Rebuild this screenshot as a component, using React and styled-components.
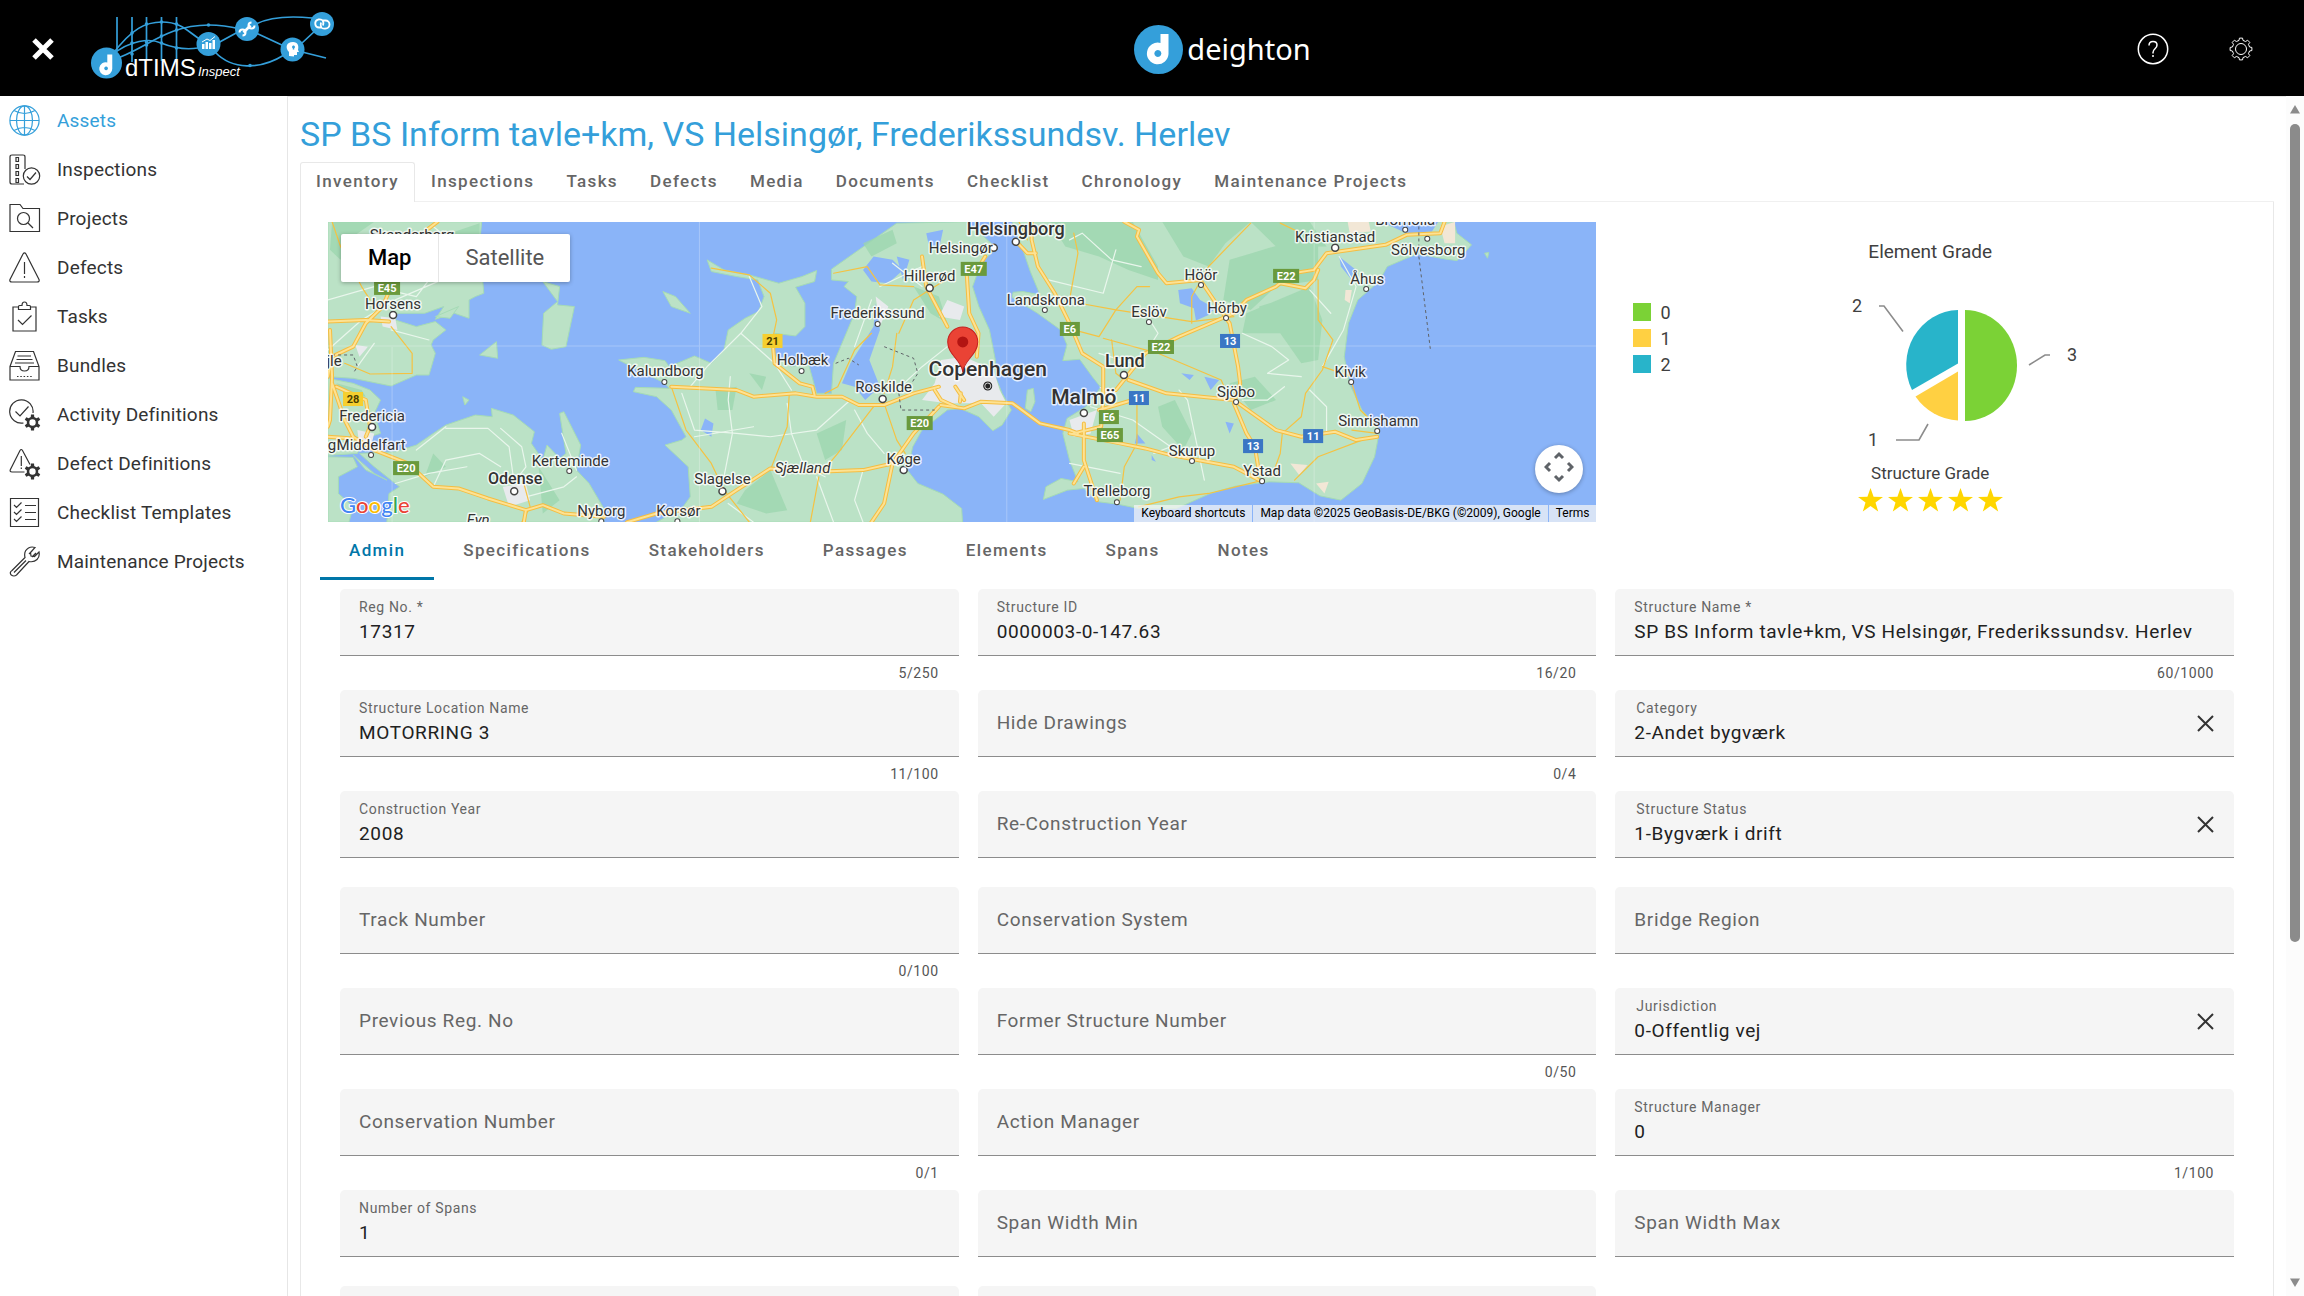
import React, { useId } from "react";
import styled, { createGlobalStyle } from "styled-components";

const BLUE = "#349fda";
const GlobalStyle = createGlobalStyle`
  *, *::before, *::after { box-sizing: border-box; }
  body { margin: 0; background: #fff; color: #333; font-family: Roboto, "Liberation Sans", sans-serif; }
  button, input { font: inherit; letter-spacing: inherit; color: inherit; border: 0; background: none; padding: 0; margin: 0; outline: 0; }
  h1, h2, h3, ul { margin: 0; padding: 0; font-weight: 400; }
  ul { list-style: none; }
  a { color: inherit; text-decoration: none; }
`;

const Shell = styled.div`
  display: flex;
  flex-direction: column;
  height: 100vh;
  overflow: hidden;
`;
const Header = styled.header`
  flex: none;
  display: flex;
  align-items: center;
  justify-content: space-between;
  height: 96px;
  padding: 2px 19px 0 0;
  background: #000;
  color: #fff;
`;
const HeaderStart = styled.div`
  display: flex;
  align-items: center;
`;
const MenuButton = styled.button`
  display: flex;
  align-items: center;
  justify-content: center;
  width: 86px;
  height: 94px;
`;
const Brand = styled.div`
  display: flex;
  align-items: center;
  gap: 4px;
  font: 29px/40px "Noto Sans", sans-serif;
`;
const HeaderEnd = styled.div`
  display: flex;
`;
const HeaderButton = styled.button`
  display: flex;
  align-items: center;
  justify-content: center;
  width: 88px;
  height: 94px;
`;
const Body = styled.div`
  flex: 1;
  display: flex;
  min-height: 0;
`;
const Sidebar = styled.nav`
  flex: none;
  width: 288px;
  border-right: 1px solid #e6e6e6;
`;
const NavLink = styled.a`
  display: flex;
  align-items: center;
  gap: 16px;
  height: 49px;
  padding-left: 9px;
  font-size: 19px;
  line-height: 24px;
  letter-spacing: 0.01em;
  color: ${(p) => (p.$active ? BLUE : "#333")};
`;
const NavIcon = styled.svg`
  flex: none;
  width: 32px;
  height: 32px;
  fill: none;
  stroke: currentColor;
  stroke-width: 1.2;
`;
const Main = styled.main`
  flex: 1;
  min-width: 0;
  overflow: hidden;
  padding: 17px 12px 0;
  border-top: 1px solid #e6e6e6;
`;
const Title = styled.h1`
  margin-bottom: 8px;
  font-size: 34px;
  line-height: 40px;
  color: ${BLUE};
`;
const PageTabs = styled.div`
  display: flex;
  border-bottom: 1px solid #f0f0f0;
`;
const PageTab = styled.button`
  height: 40px;
  margin-bottom: -1px;
  padding: 0 15px 3px;
  border: 1px solid ${(p) => (p.$active ? "#e8e8e8" : "transparent")};
  border-bottom: 0;
  border-radius: 3px 3px 0 0;
  background: ${(p) => (p.$active ? "#fff" : "transparent")};
  font-size: 17px;
  font-weight: 500;
  letter-spacing: 0.08em;
  color: #666;
`;
const Panel = styled.section`
  border: 1px solid #e8e8e8;
  border-width: 0 1px;
`;
const Overview = styled.div`
  display: grid;
  grid-template-columns: minmax(0, 15fr) minmax(0, 8fr);
  padding: 20px 0 0 27px;
`;
const MapBox = styled.div`
  position: relative;
  height: 300px;
  overflow: hidden;
  background: #8ab4f8;
`;
const MapArt = styled.svg`
  display: block;
  width: 100%;
  height: 100%;
`;
const MapTypes = styled.div`
  position: absolute;
  top: 12px;
  left: 13px;
  display: flex;
  border-radius: 2px;
  background: #fff;
  box-shadow: 0 1px 4px rgba(0, 0, 0, 0.3);
`;
const MapTypeButton = styled.button`
  height: 48px;
  padding: 0 27px 1px;
  font-size: 22px;
  font-weight: ${(p) => (p.$active ? 500 : 400)};
  color: ${(p) => (p.$active ? "#000" : "#565656")};
  & + & {
    padding: 0 26px 1px;
    border-left: 1px solid #e6e6e6;
  }
`;
const PanButton = styled.button`
  position: absolute;
  right: 13px;
  bottom: 29px;
  width: 48px;
  height: 48px;
  border-radius: 50%;
  background: #fff;
  box-shadow: 0 1px 4px rgba(0, 0, 0, 0.3);
`;
const MapFooter = styled.div`
  position: absolute;
  right: 0;
  bottom: 0;
  display: flex;
  gap: 1px;
  font-size: 12px;
  line-height: 17px;
  color: #000;
`;
const MapNote = styled.span`
  padding: 0 7px;
  background: rgba(245, 245, 245, 0.72);
`;
const Grades = styled.div`
  display: flex;
  flex-direction: column;
  align-items: center;
  padding: 18px 9px 0 0;
  color: #404040;
`;
const ChartTitle = styled.h2`
  margin-bottom: 31px;
  font-size: 19px;
  line-height: 24px;
`;
const ChartRow = styled.div`
  align-self: stretch;
  display: flex;
  padding-left: 37px;
`;
const Legend = styled.ul`
  display: flex;
  flex-direction: column;
  gap: 8px;
  width: 213px;
  padding-top: 8px;
`;
const LegendItem = styled.li`
  display: flex;
  align-items: center;
  gap: 9px;
  height: 18px;
  font-size: 18px;
  &::before {
    content: "";
    width: 18px;
    height: 18px;
    background: ${(p) => p.$color};
  }
`;
const RatingTitle = styled.h3`
  margin: 9px 0 4px;
  font-size: 17px;
  line-height: 22px;
`;
const Stars = styled.div`
  display: flex;
  gap: 5px;
`;
const SectionTabs = styled.div`
  display: flex;
  height: 58px;
  padding-left: 19px;
`;
const SectionTab = styled.button`
  padding: 0 29px;
  border-bottom: 3px solid ${(p) => (p.$active ? "#0076a8" : "transparent")};
  font-size: 17px;
  font-weight: 500;
  letter-spacing: 0.08em;
  color: ${(p) => (p.$active ? "#0076a8" : "#666")};
`;
const Form = styled.form`
  display: grid;
  grid-template-columns: repeat(3, minmax(0, 1fr));
  gap: 10px 19px;
  padding: 9px 39px 0 39px;
`;
const Cell = styled.div`
  min-height: 86px;
`;
const Field = styled.div`
  display: grid;
  grid-template-columns: minmax(0, 1fr) auto;
  grid-template-rows: 28px 38px;
  height: 67px;
  padding: 0 19px;
  border-bottom: 1px solid #8c8c8c;
  border-radius: 5px 5px 0 0;
  background: #f5f5f5;
  letter-spacing: 0.04em;
`;
const FieldLabel = styled.label`
  grid-column: 1;
  grid-row: ${(p) => (p.$filled ? "1" : "1 / 3")};
  align-self: ${(p) => (p.$filled ? "end" : "center")};
  padding-left: ${(p) => (p.$choice ? "2px" : "0")};
  font-size: ${(p) => (p.$filled ? "14px" : "19px")};
  line-height: ${(p) => (p.$filled ? "20px" : "24px")};
  color: #666;
  pointer-events: none;
`;
const FieldInput = styled.input`
  grid-column: 1;
  grid-row: ${(p) => (p.$filled ? "2" : "1 / 3")};
  align-self: start;
  width: 100%;
  height: ${(p) => (p.$filled ? "28px" : "66px")};
  font-size: 19px;
  color: #212121;
`;
const ClearButton = styled.button`
  grid-column: 2;
  grid-row: 1 / 3;
  align-self: center;
  display: flex;
  width: 20px;
  height: 20px;
  align-items: center;
  justify-content: center;
`;
const Counter = styled.div`
  height: 24px;
  padding: 7px 20px 0;
  font-size: 14px;
  line-height: 20px;
  letter-spacing: 0.04em;
  text-align: right;
  color: #555;
`;
const ScrollBar = styled.div`
  flex: none;
  display: flex;
  flex-direction: column;
  align-items: center;
  justify-content: space-between;
  width: 18px;
  padding: 9px 0;
  background: #fcfcfc;
`;
const ScrollTrack = styled.div`
  flex: 1;
  width: 10px;
  margin: 10px 0 9px;
`;
const ScrollThumb = styled.div`
  height: 71.4%;
  border-radius: 5px;
  background: #8b8b8b;
`;
const Arrow = styled.svg`
  flex: none;
  display: block;
  width: 10px;
  height: 9px;
  fill: #8b8b8b;
`;

function gearPath(cx, cy, outer, inner, teeth) {
  const pts = [];
  const step = (Math.PI * 2) / teeth;
  for (let i = 0; i < teeth; i++) {
    const a = i * step - Math.PI / 2;
    [[-0.29, inner], [-0.18, outer], [0.18, outer], [0.29, inner]].forEach(([k, r]) =>
      pts.push(`${(cx + Math.cos(a + k * step) * r).toFixed(2)},${(cy + Math.sin(a + k * step) * r).toFixed(2)}`)
    );
  }
  return `M${pts.join("L")}Z`;
}

const SmallGear = () => (
  <g fill="currentColor" stroke="none">
    <path fillRule="evenodd" d={`${gearPath(23.5, 23.5, 8.2, 5.8, 6)}M20.3 23.5a3.2 3.2 0 1 0 6.4 0a3.2 3.2 0 1 0-6.4 0Z`} />
  </g>
);

const icons = {
  globe: <><circle cx="15.5" cy="15.5" r="14.6" /><ellipse cx="15.5" cy="15.5" rx="8" ry="14.6" /><path d="M15.5 1v29M1 15.5h29M5 5.5q10.500 6 21 0M5 25.500q10.500-6 21 0" /></>,
  inspections: <><path d="M16 15V3q0-2-2-2H3Q1 1 1 3v25q0 2 2 2h12" /><path d="M7 3.500h2.500v4H7zM7 10.500h2.500v4H7zM7 17.500h2.500v4H7zM7 24.500h2.500v4H7z" /><circle cx="22.500" cy="22" r="8.200" /><path d="m18 22.500 3 3 6-7" /></>,
  projects: <><path d="M1 28.500V1.500h10l3 4h16.500v23z" /><circle cx="14.500" cy="15.500" r="6" /><path d="m19 20 5 5" /></>,
  warn: <><path d="M14 2q1.500-2.200 3 0l13 25.500q.8 2.500-2 2.500H3q-2.800 0-2-2.500zM15.500 10v12M15.500 24v2" /></>,
  tasks: <><path d="M9 6H4v24h23V6h-5M9.500 8.500V5.500q0-1 1-1H13q0-3.500 2.500-3.500T18 4.500h2.500q1 0 1 1v3z" /><path d="m9 19 4.500 4.500 9-9" /></>,
  bundles: <><path d="M1 16.500 6.500 1.500h18l5.500 15v13.500H1zM1 16.500h10q0 4.500 4.500 4.500t4.500-4.500h10M8.500 6H22M7.500 9.500h16M6 13h19" /><path strokeDasharray="1.500 1.800" d="M8 26.500h15" /></>,
  activity: <><path d="M14.500 24A11.700 11.700 0 1 1 24 14" /><path d="m6.500 12.500 4.500 4.500 8.500-9.500" /><SmallGear /></>,
  defectDef: <><path d="M15.500 24H3q-2.500 0-1.700-2.300L11 2.500q1.200-2 2.500 0l7.500 14M12.300 8v10M12.300 19.500v1.500" /><SmallGear /></>,
  checklist: <><path d="M1.500 1.500h28v28h-28zM16 8.500h11M16 15.500h11M16 22.500h11M5 8l2.500 2.500 5-5M5 15l2.500 2.500 5-5M5 22l2.500 2.500 5-5" /></>,
  wrench: <><path d="M3 24.500 16 11.500Q14.500 5 19.500 2q3-1.700 6.500-.5l-4.500 5 .5 3.500 3.500.5 4.500-4.500q1 4.500-2 7.500t-8 2L7.500 29Q5 31 2.300 29 0 26.500 3 24.500zM5 26.500 17 14.500M20 8l3-3M23 11l4-4" /></>,
};

const navItems = [
  ["Assets", "globe"], ["Inspections", "inspections"], ["Projects", "projects"], ["Defects", "warn"], ["Tasks", "tasks"],
  ["Bundles", "bundles"], ["Activity Definitions", "activity"], ["Defect Definitions", "defectDef"],
  ["Checklist Templates", "checklist"], ["Maintenance Projects", "wrench"],
];

const D_MARK = "M15 4h8v23a10.500 10.500 0 1 1-8-10.200zM13 23.500a3 3 0 1 0 .1 0z";

function ProductLogo() {
  return (
    <svg width="250" height="80" viewBox="86 9 250 80" role="img" aria-label="dTIMS Inspect">
      <g fill="none" stroke={BLUE} strokeWidth="1.700">
        <path d="M117 17v34M132 17v45M146.500 17v42M161.500 17v44M176.500 17v42" />
        <path d="M112 55C132 28 146 22 162 22 182 22 188 32 201 40" />
        <path d="M112 55C130 40 150 38 161 43 176 49 186 50 198 48" />
        <path d="M112 60C145 50 165 25 209 25 224 25 232 27 240 29" />
        <path d="M216 44 238 32M256 24C272 16 292 16 312 18M256 33 284 46M302 43 316 30M302 52 326 58M215 52C232 70 260 70 284 55" />
      </g>
      <g fill={BLUE}>
        <circle cx="106.500" cy="63" r="15.500" />
        <circle cx="208.500" cy="44" r="12" />
        <circle cx="247" cy="29" r="12" />
        <circle cx="292.500" cy="49.500" r="12" />
        <circle cx="322" cy="24" r="12" />
        {[[132, 33], [146.500, 24], [161.500, 22], [176.500, 24], [132, 43], [146.500, 42], [161.500, 43], [161.500, 36], [176.500, 30], [146.500, 45], [132, 54], [176.500, 48], [208.500, 25], [250, 65.500]].map(([x, y], i) => (
          <circle key={i} cx={x} cy={y} r="1.800" />
        ))}
      </g>
      <path fill="#fff" fillRule="evenodd" d={D_MARK} transform="translate(98 52) scale(.62)" />
      <g fill="#fff">
        <path d="M202 44h2.500v5H202zM205.500 42h2.500v7h-2.500zM209 43h2.500v6H209zM212.500 40h2.500v9h-2.500z" />
        <path d="M202 42l5-3 3 1.500 5-4" fill="none" stroke="#fff" />
        <path d="m243.500 32.500 7-7" fill="none" stroke="#fff" strokeWidth="2.600" />
        <path d="M251.500 22.500a3 3 0 1 0 3 3M242.500 35.500a3 3 0 1 0-3-3" fill="none" stroke="#fff" strokeWidth="2" transform="rotate(0 247 29)" />
        <path d="M289 56v-4c-4-4-3-10 4-10 5 0 6 4 5 8l1 2h-2v3h-3v1.500z" />
        <path d="M292 47h3m-1.500-1.500v4" stroke={BLUE} strokeWidth="1.500" />
        <path d="M322 27.500h-3a4 4 0 0 1-1-7.800M322 20.500h3.500a4 4 0 0 1 0 8M318 19.500c5-1 6 2 5 6M326 28.500c-5 1-6-2-5-6" fill="none" stroke="#fff" strokeWidth="1.800" />
        <text x="125" y="76" fontFamily="Liberation Sans, sans-serif" fontSize="24">dTIMS</text>
        <text x="198" y="76" fontFamily="Liberation Sans, sans-serif" fontSize="13" fontStyle="italic">Inspect</text>
      </g>
    </svg>
  );
}

const LAND = [
  "M90 366H455L450 430 460 580 440 590 425 600V655L390 640 345 658 365 620 320 640 255 640 250 660 300 680 345 665 370 690 340 720 335 735 345 760 330 825 300 825 240 858 150 835 90 830Z",
  "M90 835 150 850 190 870 215 900 200 940 215 1000 175 1015 160 1060 90 1066Z",
  "M165 1060 250 1055 300 1035 340 1000 370 975 440 945 480 950 478 925 530 945 580 995 573 1030 600 1080 610 1035 640 1075 655 1060 640 940 650 935 690 1035 680 1110 710 1150 745 1225V1266H230L235 1180 260 1160 200 1100Z",
  "M90 1070 150 1072 160 1100 115 1130 115 1180 150 1220 140 1266H90Z",
  "M600 545 640 560 635 615 675 620 655 740 620 748 598 735 602 640 635 605Z",
  "M450 765 490 725 493 775ZM885 575 915 590 950 640 905 620ZM345 650 400 620 380 655ZM410 890 425 900 415 915ZM150 1065 200 1120 230 1140 180 1110Z",
  "M780 780 840 772 890 782 900 800 960 768 1000 790 1030 750 1040 690 1080 655 1112 635 1125 590 1110 540 1060 530 1000 515 990 480 1030 510 1090 525 1160 550 1215 530 1250 512 1245 545 1200 562 1222 610 1222 680 1200 708 1150 700 1150 765 1190 800 1230 790 1250 880 1285 880 1290 790 1320 700 1340 640 1345 590 1315 560 1325 545 1285 540V508L1440 370 1604 366 1634 395 1676 445 1640 490 1620 560 1635 620 1660 690 1674 780 1674 830 1690 880 1712 930 1690 975 1668 992 1635 950 1590 925 1560 930 1500 990 1478 1040 1465 1110 1490 1150 1550 1182 1594 1225 1596 1266H870L930 1225 950 1190 945 1100 890 1035 930 1020 940 1010 905 930 870 890 815 875 820 862 900 865 890 850Z",
  "M1714 366 1734 430 1757 515 1780 585 1740 575 1716 577 1714 592 1774 640 1829 690 1844 735 1834 782 1874 778 1904 830 1924 862 1889 920 1844 955 1834 1000 1850 1080 1870 1145 1830 1135 1794 1160 1788 1198 1845 1170 1884 1165 1919 1205 1964 1212 2014 1225 2104 1225 2184 1180 2244 1158 2324 1145 2394 1148 2444 1187 2494 1200 2544 1150 2574 1070 2586 990 2544 930 2514 850 2502 770 2512 670 2534 600 2584 545 2604 500 2674 462 2744 478 2770 482 2804 435 2769 400 2762 366ZM1750 870 1764 865 1768 905 1758 935 1745 925ZM2835 460 2845 458 2842 475Z",
];
const WATER = [
  "M1360 510 1385 470 1430 480 1455 510 1420 550 1380 545ZM985 955 1005 970 1000 1010 975 990ZM1390 610 1400 690 1375 780 1400 860 1365 900 1340 860 1310 850 1330 790 1385 680ZM1440 470 1470 480 1455 540ZM1510 400 1550 390 1540 450 1515 430Z",
  "M2108 570 2140 565 2160 600 2195 625 2180 645 2150 662 2145 625 2112 610ZM2490 470 2530 510 2520 540 2494 500ZM2580 366H2725L2710 395 2650 400 2605 375ZM2115 820 2145 825 2135 840ZM2170 830 2205 840 2185 870ZM2220 965 2240 970 2230 1000ZM2045 1065 2055 1085 2045 1080ZM2010 1000 2030 1030 2005 1030Z",
];
const FOREST = [
  "M1804 366H2000L2060 500 2060 540 1990 510 1920 470 1840 440ZM2070 366H2280L2220 430 2180 500 2120 470ZM2230 480 2440 400 2440 540 2340 560 2280 630 2215 600ZM2420 560 2450 660 2440 780 2400 790 2350 700 2260 700 2270 640ZM2060 920 2100 900 2140 1000 2120 1050 2070 980ZM2230 850 2290 830 2340 900 2280 930ZM2300 620 2350 600 2370 680 2310 700ZM2280 366H2420L2460 440 2340 440Z",
  "M1250 1000 1320 960 1310 1050 1270 1080ZM1080 1170 1140 1110 1180 1230 1130 1240 1060 1210ZM1090 820 1130 830 1120 870ZM1010 870 1060 860 1050 930 1015 930ZM1360 430 1430 390 1440 430 1380 470ZM1480 560 1540 590 1560 670 1520 640ZM100 366H200L150 410 120 480 95 450ZM380 400 450 370V480L400 450ZM590 1100 640 1200 600 1240ZM110 850 170 870 180 890 130 880ZM340 1060 370 1100 320 1130Z",
];
const URBAN = [
  "M1545 780 1600 770 1670 810 1684 870 1700 910 1670 950 1640 910 1560 910 1500 900 1530 850ZM505 1160 560 1150 570 1200 520 1220ZM1850 960 1915 930 1900 1000 1860 1010ZM215 650 250 655 255 690 220 680ZM1390 590 1420 620 1400 680ZM160 990 200 1000 190 1050 165 1040ZM1560 600 1600 620 1590 660 1540 650ZM1920 860 1965 870 1950 900ZM155 735 185 740 165 770Z",
];
const BEACH = ["M2510 366H2560L2565 395 2515 400ZM2505 570 2520 570 2515 610 2503 600ZM2374 1090 2415 1095 2395 1125ZM2435 1150 2465 1145 2455 1180ZM2730 380 2765 366 2765 430 2740 430Z"];
const MINOR = [
  "M90 750 170 660 250 600 360 540 420 470 455 450M90 600 200 560 300 590 330 540 400 480M240 690 330 720M160 800 200 730M340 380 430 470M300 1050 370 980M370 985 470 985 520 1040 530 1130M530 1150 560 1100 550 1040 500 985M340 1160 370 1080 450 1060 500 1100M645 1000 680 1110M560 1190 650 1160 680 1130M250 1150 330 1120 420 1100",
  "M1090 530 1120 620 1070 700 990 800 950 860M1070 700 1150 790 1190 870M1045 830 1040 900 1050 1000 1030 1130M930 880 960 990 1060 1000 1140 1010 1250 990 1330 900M1180 910 1190 1000 1220 1100 1270 1130M960 1010 1100 980M1340 930 1370 1000 1410 1060M1250 1130 1290 1266M1360 1110 1340 1200 1360 1266M1040 1210 1100 1266M1400 560 1500 500M1340 740 1380 600M1560 740 1500 800 1440 870M1500 560 1430 490",
  "M1850 420 1880 400 1950 480 2020 500M1960 450 1930 580 1800 540M2040 660 2060 700 2040 740M2260 700 2330 740 2370 780 2320 820 2400 830M2110 870 2130 900 2160 1080 2170 1140M2420 870 2460 920 2460 1000M2420 570 2470 640M1900 920 2000 960 2090 1040 2050 1060M1850 1090 1970 1120M2490 470 2530 560 2500 690 2450 800M2260 900 2320 900 2360 860M1920 760 2000 790",
];
const SECOND = [
  "M100 366 120 440 170 560 190 600M240 680 290 760 290 820 190 822 130 790M1000 505 1090 525 1140 580 1155 660 1145 720M905 860 940 990 1000 1090 1030 1170M1185 880 1180 980 1140 1110M1385 920 1300 1060 1260 1120M1410 910 1440 1020 1460 1060M1370 500 1400 555 1480 560M1380 700 1340 750 1300 860 1270 880M1440 700 1430 800 1410 880M1555 540 1480 600 1445 700M1290 520 1370 500M555 1150 570 1220 550 1266M1255 1130 1235 1266M1030 1170 1090 1266",
  "M1860 400 1870 460 1850 600M1874 610 1960 630 2010 560 2040 560M1960 630 1920 710 1860 690M1960 630 2140 665 2240 650M2280 370 2180 500 2140 590 2140 670M1930 715 2060 760 2210 840 2220 870M1950 720 1960 820 1980 840M2440 540 2440 660 2475 720 2450 810 2410 880 2400 950 2355 1000 2350 1060 2330 1130M2450 800 2520 830M2520 850 2540 930 2580 980M2384 1140 2440 1070 2544 1020M2520 990 2580 1000M2010 900 2010 1030 1980 1100 1970 1200M2350 370 2400 400M1750 420 1730 366M2014 1220 2110 1190 2180 1180 2310 1140",
];
const MAJOR = [
  "M90 665 180 660 235 665M90 830 100 770 150 740 180 670 220 620 240 560M95 690 100 830 95 960 90 980M100 850 130 960 150 1010 200 1050 280 1090 340 1160 400 1165 470 1195 560 1230 600 1215 650 1240 745 1250M90 1010 150 1015M110 860 180 900 190 980 180 1010M325 390 350 366M800 1266 870 1240 1000 1220 1060 1170 1140 1105 1250 1115 1360 1110 1430 1090 1480 1000 1540 920M905 860 1060 870 1100 890 1200 880 1250 890 1310 890 1350 915 1410 915 1480 880 1540 860M1145 720 1150 790 1210 850 1240 860 1245 885M1430 1090 1410 1210 1380 1266M1500 470 1510 560 1560 680M1530 870 1545 900 1580 920M560 1230 555 1266",
  "M1544 915 1600 925 1640 905 1715 910 1780 970 1850 990 1870 1000M1592 880 1590 905M1650 470 1640 490 1606 520 1612 640 1634 700 1630 770M1579 860 1600 900M1720 420 1750 460 1770 460M1760 366 1760 420 1775 500 1815 580 1850 670 1880 760 1930 800 1930 900 1925 980 1860 1000M1980 366 2015 390 2010 410 2060 520 2080 550 2160 540 2230 670 2250 800 2255 850 2240 910 2270 1000 2290 1040 2300 1120M1960 870 2030 760 2110 710 2240 640 2270 600 2340 560 2380 520 2430 510 2460 460 2600 435 2650 405 2730 400 2740 366M2350 550 2410 565 2430 540 2440 510M1990 840 2080 880 2240 900 2340 990 2400 1010 2480 995 2530 1020 2580 1010M1884 970V1080L1915 1200M1884 1100 1860 1150M1850 1000 1970 1030 2030 1045 2090 1065 2240 1100 2300 1140M1920 930 2000 900",
];

const PLACES = [
  ["Skanderborg", 84, 18, 15], ["Horsens", 65, 87, 15], ["jle", 6, 144, 15], ["Fredericia", 44, 199, 15], ["Middelfart", 43, 228, 15], ["g", 4, 228, 15],
  ["Kerteminde", 242, 244, 15], ["Odense", 187, 262, 16, 500], ["Nyborg", 273, 294, 15], ["Fyn", 150, 303, 15, 400, "italic"],
  ["Kalundborg", 337, 154, 15], ["Holbæk", 474, 143, 15], ["Roskilde", 555, 170, 15], ["Frederikssund", 549, 96, 15], ["Hillerød", 601, 59, 15],
  ["Helsingør", 632, 31, 15], ["Slagelse", 394, 262, 15], ["Korsør", 350, 294, 15], ["Sjælland", 474, 251, 15, 400, "italic"], ["Køge", 575, 242, 15],
  ["Copenhagen", 659, 154, 21, 500], ["Helsingborg", 687, 13, 18, 500], ["Landskrona", 717, 83, 15], ["Eslöv", 820, 95, 15], ["Höör", 872, 58, 15], ["Hörby", 898, 91, 15],
  ["Kristianstad", 1006, 20, 15], ["Bromölla", 1076, 3, 15], ["Sölvesborg", 1099, 33, 15], ["Åhus", 1038, 62, 15], ["Lund", 796, 145, 18, 500], ["Malmö", 755, 182, 21, 500],
  ["Sjöbo", 907, 175, 15], ["Kivik", 1021, 155, 15], ["Simrishamn", 1049, 204, 15], ["Skurup", 863, 234, 15], ["Ystad", 933, 254, 15], ["Trelleborg", 788, 274, 15],
];
const DOTS = [[65, 93, 1], [44, 205, 1], [43, 233], [241, 249], [186, 269, 1], [273, 299], [336, 160], [473, 149], [554, 177, 1], [549, 102], [601, 66, 1], [665, 26, 1], [394, 269, 1], [349, 299], [575, 248, 1], [687, 20, 1], [716, 88], [820, 100], [872, 63], [897, 96], [1006, 26, 1], [1076, 8], [1098, 17], [1037, 67], [795, 153, 1], [755, 191, 1], [907, 180], [1022, 160], [1048, 209], [863, 239], [933, 259], [788, 280]];
const SHIELDS = [
  ["E45", 59, 66, "#6a9a3c"], ["E20", 78, 246, "#6a9a3c"], ["E20", 591, 201, "#6a9a3c"], ["E47", 645, 47, "#6a9a3c"], ["E6", 741, 107, "#6a9a3c"], ["E22", 832, 125, "#6a9a3c"],
  ["E22", 957, 54, "#6a9a3c"], ["E6", 780, 195, "#6a9a3c"], ["E65", 781, 213, "#6a9a3c"], ["13", 901, 119, "#3a76c4"], ["13", 924, 224, "#3a76c4"], ["11", 810, 176, "#3a76c4"],
  ["11", 984, 214, "#3a76c4"], ["28", 25, 177, "#f6cf2f", "#4a4000"], ["21", 444, 119, "#f6cf2f", "#4a4000"],
];

function MapDrawing() {
  const layer = (paths, props) => paths.map((d, i) => <path key={i} d={d} vectorEffect="non-scaling-stroke" {...props} />);
  const line = (stroke, strokeWidth) => ({ fill: "none", stroke, strokeWidth, strokeLinejoin: "round", strokeLinecap: "round" });
  return (
    <MapArt viewBox="0 0 1267 300" preserveAspectRatio="xMidYMid slice" role="img" aria-label="Map of Copenhagen and surroundings">
      <rect width="1267" height="300" fill="#8ab4f8" />
      <g transform="translate(-38 -122) scale(.4209 .33333)">
        {layer(LAND, { fill: "#bbe2c6", stroke: "#a5dbb6", strokeWidth: 1 })}
        {layer(FOREST, { fill: "#9bd5ad", opacity: 0.75 })}
        {layer(WATER, { fill: "#8ab4f8" })}
        {layer(URBAN, { fill: "#e8eaed" })}
        {layer(BEACH, { fill: "#f2e7d6" })}
        {layer(MINOR, line("#e9f6ec", 1.2))}
        {layer(SECOND, line("#f5c242", 1.2))}
        {layer(MAJOR, line("#f5bd41", 4))}
        {layer(MAJOR, line("#fde293", 2))}
        <path d="M1295 790 1325 775 1350 795M1410 740 1480 775 1490 820 1470 860M1445 880 1450 930 1530 930M100 765H150L160 800 150 820M2679 380V470L2707 755" fill="none" stroke="#5f6368" strokeDasharray="3 3" vectorEffect="non-scaling-stroke" />
      </g>
      <path d="M64 125V300M371 0V300M678 0V300M985 0V300M0 124H1267" stroke="#fff" opacity=".25" />
      {DOTS.map(([x, y, big], i) => (
        <circle key={i} cx={x} cy={y} r={big ? 3.500 : 2.500} fill="#fff" stroke="#444" strokeWidth={big ? 1.500 : 1} />
      ))}
      <circle cx="659" cy="164" r="4" fill="#222" stroke="#222" /><circle cx="659" cy="164" r="3" fill="none" stroke="#fff" strokeWidth=".8" />
      {SHIELDS.map(([t, x, y, bg, fg], i) => {
        const w = t.length === 3 ? 26 : 20;
        return (
          <g key={i}>
            <rect x={x - w / 2} y={y - 7} width={w} height="14" fill={bg} />
            <text x={x} y={y + 4} fontSize="11" fontWeight="700" fill={fg || "#fff"} textAnchor="middle">{t}</text>
          </g>
        );
      })}
      <g textAnchor="middle" stroke="#fff" strokeOpacity=".8" strokeWidth="3" strokeLinejoin="round" paintOrder="stroke" fill="#333">
        {PLACES.map(([t, x, y, size, weight, style], i) => (
          <text key={i} x={x} y={y} fontSize={size} fontWeight={weight || 400} fontStyle={style}>{t}</text>
        ))}
      </g>
      <path d="M634 150C633 138 619 133 619 120a15 15 0 0 1 30 0C649 133 635 138 634 150Z" fill="#ea4335" stroke="#c5221f" />
      <circle cx="634" cy="120" r="5.500" fill="#b31412" />
      <text x="12" y="291" fontFamily="Lato, sans-serif" fontSize="22" fontWeight="500" stroke="#fff" strokeWidth="2" paintOrder="stroke">
        <tspan fill="#4285f4">G</tspan><tspan fill="#ea4335">o</tspan><tspan fill="#fbbc04">o</tspan><tspan fill="#4285f4">g</tspan><tspan fill="#34a853">l</tspan><tspan fill="#ea4335">e</tspan>
      </text>
    </MapArt>
  );
}

const PieDrawing = () => (
  <svg width="240" height="158" viewBox="1846 295 240 158" role="img" aria-label="Element Grade: 3, 1, 2">
    <path d="M1965 310A52 55.500 0 0 1 1965 421Z" fill="#7bd236" />
    <path d="M1958 420.500A55 55 0 0 1 1915.500 396.500L1958 371.500Z" fill="#ffd042" />
    <path d="M1958 310A53 55 0 0 0 1912 390L1958 363.500Z" fill="#28b4ca" />
    <path d="M1879 306h5l19 25.500M2029 365l16-10h5M1896 440h23l9-16" fill="none" stroke="#8c8c8c" strokeWidth="1.600" />
    <g fontSize="18" fill="#404040">
      <text x="1852" y="312">2</text><text x="2067" y="361">3</text><text x="1868" y="446">1</text>
    </g>
  </svg>
);

function FormField({ label, value = "", count, choice }) {
  const id = useId();
  const filled = value !== "";
  return (
    <Cell>
      <Field>
        <FieldLabel htmlFor={id} $filled={filled} $choice={choice}>{label}</FieldLabel>
        <FieldInput id={id} defaultValue={value} $filled={filled} />
        {choice && (
          <ClearButton type="button" aria-label={`Clear ${label}`}>
            <svg width="17" height="17" viewBox="0 0 17 17" stroke="#333" strokeWidth="2"><path d="m1 1 15 15M16 1 1 16" /></svg>
          </ClearButton>
        )}
      </Field>
      {count && <Counter>{count}</Counter>}
    </Cell>
  );
}

const NAME = "SP BS Inform tavle+km, VS Helsingør, Frederikssundsv. Herlev";
const fields = [
  { label: "Reg No. *", value: "17317", count: "5/250" },
  { label: "Structure ID", value: "0000003-0-147.63", count: "16/20" },
  { label: "Structure Name *", value: NAME, count: "60/1000" },
  { label: "Structure Location Name", value: "MOTORRING 3", count: "11/100" },
  { label: "Hide Drawings", count: "0/4" },
  { label: "Category", value: "2-Andet bygværk", choice: true },
  { label: "Construction Year", value: "2008" },
  { label: "Re-Construction Year" },
  { label: "Structure Status", value: "1-Bygværk i drift", choice: true },
  { label: "Track Number", count: "0/100" },
  { label: "Conservation System" },
  { label: "Bridge Region" },
  { label: "Previous Reg. No" },
  { label: "Former Structure Number", count: "0/50" },
  { label: "Jurisdiction", value: "0-Offentlig vej", choice: true },
  { label: "Conservation Number", count: "0/1" },
  { label: "Action Manager" },
  { label: "Structure Manager", value: "0", count: "1/100" },
  { label: "Number of Spans", value: "1" },
  { label: "Span Width Min" },
  { label: "Span Width Max" },
  { label: "" },
  { label: "" },
];

const pageTabs = ["Inventory", "Inspections", "Tasks", "Defects", "Media", "Documents", "Checklist", "Chronology", "Maintenance Projects"];
const sectionTabs = ["Admin", "Specifications", "Stakeholders", "Passages", "Elements", "Spans", "Notes"];

export default function App() {
  return (
    <Shell>
      <GlobalStyle />
      <Header>
        <HeaderStart>
          <MenuButton aria-label="Close menu">
            <svg width="22" height="22" viewBox="0 0 22 22" stroke="#fff" strokeWidth="5"><path d="m2 2 18 18M20 2 2 20" /></svg>
          </MenuButton>
          <ProductLogo />
        </HeaderStart>
        <Brand>
          <svg width="49" height="49" viewBox="0 0 49 49" aria-hidden="true">
            <circle cx="24.500" cy="24.500" r="24.500" fill={BLUE} />
            <path d="M26.500 9h8v20a10.800 10.800 0 1 1-8-11zM23.800 25a3.500 3.500 0 1 0 .1 0z" fill="#fff" fillRule="evenodd" />
          </svg>
          deighton
        </Brand>
        <HeaderEnd>
          <HeaderButton aria-label="Help">
            <svg width="32" height="32" viewBox="0 0 32 32" fill="none" stroke="#fff" strokeWidth="1.500">
              <circle cx="16" cy="16" r="14.700" /><path d="M12 12.500q0-4 4-4t4 3.500q0 2-2 3.800T16 19.500v1M16 22v2" />
            </svg>
          </HeaderButton>
          <HeaderButton aria-label="Settings">
            <svg width="24" height="24" viewBox="0 0 24 24" fill="none" stroke="#fff" strokeLinejoin="round">
              <path d={gearPath(12, 12, 11, 8.800, 8)} /><circle cx="12" cy="12" r="5.500" />
            </svg>
          </HeaderButton>
        </HeaderEnd>
      </Header>
      <Body>
        <Sidebar>
          {navItems.map(([label, icon], i) => (
            <NavLink key={label} href="#" $active={i === 0}>
              <NavIcon viewBox="0 0 32 32" aria-hidden="true">{icons[icon]}</NavIcon>
              {label}
            </NavLink>
          ))}
        </Sidebar>
        <Main>
          <Title>{NAME}</Title>
          <PageTabs role="tablist">
            {pageTabs.map((t, i) => <PageTab key={t} role="tab" $active={i === 0}>{t}</PageTab>)}
          </PageTabs>
          <Panel>
            <Overview>
              <MapBox>
                <MapDrawing />
                <MapTypes>
                  <MapTypeButton $active>Map</MapTypeButton>
                  <MapTypeButton>Satellite</MapTypeButton>
                </MapTypes>
                <PanButton aria-label="Map camera controls">
                  <svg width="30" height="36" viewBox="0 0 30 36" fill="none" stroke="#5f6368" strokeWidth="3">
                    <path d="m11 9 4-4 4 4M11 27l4 4 4-4M6 14l-4 4 4 4M24 14l4 4-4 4" />
                  </svg>
                </PanButton>
                <MapFooter>
                  <MapNote as="a" href="#">Keyboard shortcuts</MapNote>
                  <MapNote>Map data ©2025 GeoBasis-DE/BKG (©2009), Google</MapNote>
                  <MapNote as="a" href="#">Terms</MapNote>
                </MapFooter>
              </MapBox>
              <Grades>
                <ChartTitle>Element Grade</ChartTitle>
                <ChartRow>
                  <Legend>
                    <LegendItem $color="#7bd236">0</LegendItem>
                    <LegendItem $color="#ffd042">1</LegendItem>
                    <LegendItem $color="#28b4ca">2</LegendItem>
                  </Legend>
                  <PieDrawing />
                </ChartRow>
                <RatingTitle>Structure Grade</RatingTitle>
                <Stars role="img" aria-label="5 of 5 stars">
                  {[0, 1, 2, 3, 4].map((i) => (
                    <svg key={i} width="25" height="24" viewBox="0 0 25 24" fill="#ffd600">
                      <path d="m12.500 0 3.100 8.700 9.400.2-7.500 5.600 2.700 9-7.700-5.400-7.700 5.400 2.700-9L0 8.900l9.400-.2z" />
                    </svg>
                  ))}
                </Stars>
              </Grades>
            </Overview>
            <SectionTabs role="tablist">
              {sectionTabs.map((t, i) => <SectionTab key={t} role="tab" $active={i === 0}>{t}</SectionTab>)}
            </SectionTabs>
            <Form>
              {fields.map((f, i) => <FormField key={i} {...f} />)}
            </Form>
          </Panel>
        </Main>
        <ScrollBar aria-hidden="true">
          <Arrow viewBox="0 0 10 9"><path d="M5 0 10 8.500H0z" /></Arrow>
          <ScrollTrack><ScrollThumb /></ScrollTrack>
          <Arrow viewBox="0 0 10 9"><path d="M0 .5h10L5 9z" /></Arrow>
        </ScrollBar>
      </Body>
    </Shell>
  );
}
